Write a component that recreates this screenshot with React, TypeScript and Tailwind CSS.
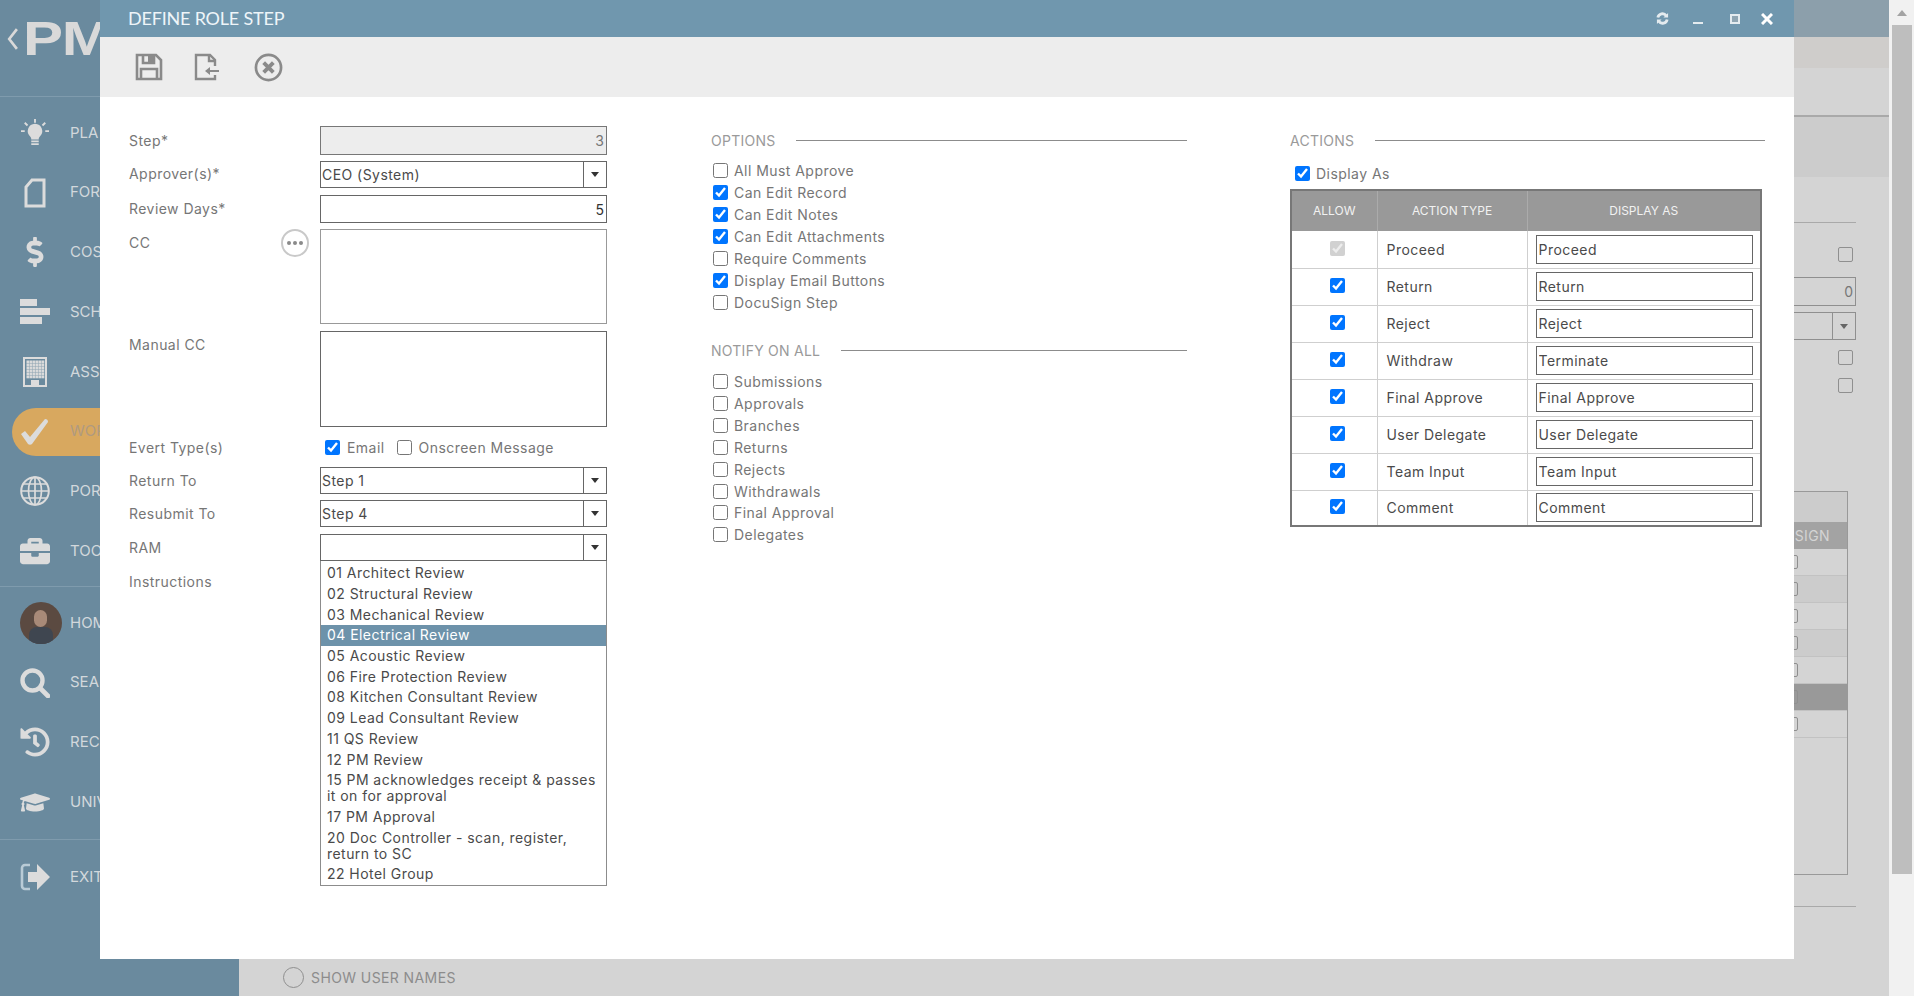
import { useState } from "react";
import { FaBriefcase, FaDollarSign, FaGraduationCap, FaHistory } from "react-icons/fa";

const labelText = "text-[14px] text-[#767676] tracking-[0.45px]";
const valueText = "text-[14px] text-[#4a4a4a] tracking-[0.45px]";

type IconProps = { className?: string };

function BulbIcon({ className }: IconProps) {
  return (
    <svg viewBox="0 0 30 30" className={className} fill="currentColor" stroke="currentColor">
      <path d="M15 0v4M4 4l3 3M26 4l-3 3M0 13h4M26 13h4" strokeWidth="2" fill="none" />
      <path d="M15 5a8 8 0 0 0-5 14c1 1 1 2 1 3h8c0-1 0-2 1-3a8 8 0 0 0-5-14z" stroke="none" />
      <path d="M11 24h8M11 27h8" strokeWidth="1.8" />
    </svg>
  );
}

function FormIcon({ className }: IconProps) {
  return (
    <svg viewBox="0 0 22 30" className={className} fill="none" stroke="currentColor" strokeWidth="3">
      <path d="M8 2h12v26H2V9z" />
    </svg>
  );
}

function BarsIcon({ className }: IconProps) {
  return (
    <svg viewBox="0 0 30 26" className={className} fill="currentColor">
      <rect x="0" y="0" width="17" height="7" />
      <rect x="0" y="9" width="30" height="7" />
      <rect x="0" y="18" width="22" height="7" />
    </svg>
  );
}

function BuildingIcon({ className }: IconProps) {
  const dots = [];
  for (let y = 4; y < 20; y += 3) {
    for (let x = 4; x < 20; x += 3) {
      dots.push(<rect key={`${x}-${y}`} x={x} y={y} width="1.8" height="1.8" fill="currentColor" />);
    }
  }
  return (
    <svg viewBox="0 0 24 30" className={className} fill="none" stroke="currentColor">
      <rect x="1" y="1" width="22" height="28" strokeWidth="2" />
      {dots}
      <path d="M8 29v-6h8v6z" fill="currentColor" stroke="none" />
    </svg>
  );
}

function CheckMark({ className }: IconProps) {
  return (
    <svg viewBox="0 0 28 26" className={className} fill="currentColor">
      <path d="M0 15l4-3 5 6L24 0c2 0 3 1 3 3L11 25c-1 1-3 1-4 0z" />
    </svg>
  );
}

function GlobeIcon({ className }: IconProps) {
  return (
    <svg viewBox="0 0 30 30" className={className} fill="none" stroke="currentColor" strokeWidth="1.7">
      <circle cx="15" cy="15" r="13.8" strokeWidth="2" />
      <ellipse cx="15" cy="15" rx="6.5" ry="13.8" />
      <path d="M15 1v28M1 15h28M3.5 8h23M3.5 22h23" />
    </svg>
  );
}

function SearchIcon({ className }: IconProps) {
  return (
    <svg viewBox="0 0 30 30" className={className} fill="none" stroke="currentColor">
      <circle cx="12.5" cy="12.5" r="10" strokeWidth="4.4" />
      <path d="M20 20l8 8" strokeWidth="4.6" strokeLinecap="round" />
    </svg>
  );
}

function ExitIcon({ className }: IconProps) {
  return (
    <svg viewBox="0 0 30 30" className={className} fill="none">
      <path d="M10 3H5a3 3 0 0 0-3 3v18a3 3 0 0 0 3 3h5" stroke="#b9cbd6" strokeWidth="2.6" />
      <path d="M8 10h9V2l13 13-13 13v-8H8z" fill="#dcdcdc" />
    </svg>
  );
}

const navTop = [
  { icon: BulbIcon, label: "PLA", size: "w-[28px] h-[30px]" },
  { icon: FormIcon, label: "FOR", size: "w-[22px] h-[30px]" },
  { icon: FaDollarSign, label: "COS", size: "w-[26px] h-[30px]" },
  { icon: BarsIcon, label: "SCH", size: "w-[30px] h-[26px]" },
  { icon: BuildingIcon, label: "ASS", size: "w-[24px] h-[30px]" },
  { icon: CheckMark, label: "WOR", size: "w-[28px] h-[26px]", active: true },
  { icon: GlobeIcon, label: "POR", size: "w-[30px] h-[30px]" },
  { icon: FaBriefcase, label: "TOO", size: "w-[30px] h-[30px]" },
];

const navBottom = [
  { icon: SearchIcon, label: "SEA", size: "w-[30px] h-[30px]" },
  { icon: FaHistory, label: "REC", size: "w-[30px] h-[30px]" },
  { icon: FaGraduationCap, label: "UNIV", size: "w-[30px] h-[27px]" },
];

function NavRow({ item }: { item: (typeof navTop)[number] }) {
  return (
    <div className="flex h-[59.75px] items-center pl-[12px]">
      <div
        className={
          item.active
            ? "flex h-[48px] flex-1 items-center rounded-l-full bg-[#d8a85f] pl-[8px] text-[#dcdcdc]"
            : "flex h-[48px] flex-1 items-center pl-[8px] text-[#dcdcdc]"
        }
      >
        <div className="flex w-[30px] justify-center">
          <item.icon className={item.size} />
        </div>
        <span className={item.active ? "ml-[20px] text-[15px] text-[#b09a7f]" : "ml-[20px] text-[15px] text-[#d2d8dc]"}>
          {item.label}
        </span>
      </div>
    </div>
  );
}

function Sidebar() {
  return (
    <aside className="flex h-full w-[239px] shrink-0 flex-col bg-[#6a8a9e]">
      <div className="h-[97px] shrink-0 border-b border-[#7f9bad]">
        <div className="flex items-center pt-[19px] pl-[7px]">
          <svg viewBox="0 0 10 20" className="h-[22px] w-[11px]" fill="none" stroke="#d9d9d9" strokeWidth="2.4">
            <path d="M9 1L2 10l7 9" />
          </svg>
          <span className="ml-[5px] origin-left scale-x-[1.25] font-['Liberation_Sans',sans-serif] text-[48px] leading-[40px] font-bold tracking-[-1px] text-[#d9d9d9]">
            PM
          </span>
        </div>
      </div>
      <div className="h-[490px] shrink-0 border-b border-[#7f9bad] pt-[6px]">
        {navTop.map((item) => (
          <NavRow key={item.label} item={item} />
        ))}
      </div>
      <div className="h-[253px] shrink-0 border-b border-[#7f9bad] pt-[6px]">
        <div className="flex h-[59.75px] items-center pl-[20px]">
          <div className="relative h-[42px] w-[42px] shrink-0 overflow-hidden rounded-full bg-[#5b4a41]">
            <div className="absolute top-[8px] left-[14px] h-[17px] w-[13px] rounded-full bg-[#a88a78]" />
            <div className="absolute top-[25px] left-[9px] h-[20px] w-[24px] rounded-t-lg bg-[#3f4650]" />
          </div>
          <span className="ml-[8px] text-[15px] text-[#d2d8dc]">HOM</span>
        </div>
        {navBottom.map((item) => (
          <NavRow key={item.label} item={item} />
        ))}
      </div>
      <div className="mt-[7px]">
        <NavRow item={{ icon: ExitIcon, label: "EXIT", size: "w-[30px] h-[30px]" }} />
      </div>
    </aside>
  );
}

const pageRows = ["bg-[#d4d4d4]", "bg-[#cccccc]", "bg-[#d4d4d4]", "bg-[#cccccc]", "bg-[#d4d4d4]", "bg-[#999999]", "bg-[#d4d4d4]"];

// the page behind the dialog, only its right edge and bottom show
function BackPage() {
  return (
    <main className="flex h-full min-w-0 flex-1 flex-col bg-[#d4d4d4]">
      <div className="h-[37px] shrink-0 bg-[#8c9fab]" />
      <div className="h-[31px] shrink-0 bg-[#cfcdcb]" />
      <div className="h-[49px] shrink-0 border-b-2 border-[#a9a9a9]" />
      <div className="h-[60px] shrink-0 bg-[#cccccc]" />
      <div className="flex flex-1 flex-col pr-[33px]">
        <div className="mt-[45px] border-b border-[#a9a9a9]" />
        <div className="mt-[24px] flex justify-end pr-[3px]">
          <span className="h-[15px] w-[15px] rounded-[2px] border border-[#8f8f8f]" />
        </div>
        <div className="mt-[15px] flex h-[29px] items-center justify-end border border-[#8f8f8f] pr-[2px] text-[14px] text-[#777]">
          0
        </div>
        <div className="mt-[6px] flex h-[28px] justify-end border border-[#8f8f8f]">
          <div className="flex w-[23px] items-center justify-center border-l border-[#8f8f8f]">
            <span className="border-x-[4px] border-t-[5px] border-x-transparent border-t-[#666]" />
          </div>
        </div>
        <div className="mt-[10px] flex justify-end pr-[3px]">
          <span className="h-[15px] w-[15px] rounded-[2px] border border-[#8f8f8f]" />
        </div>
        <div className="mt-[13px] flex justify-end pr-[3px]">
          <span className="h-[15px] w-[15px] rounded-[2px] border border-[#8f8f8f]" />
        </div>
        <div className="mt-[98px] mr-[8px] flex h-[384px] flex-col border border-[#999]">
          <div className="h-[30px] shrink-0 bg-[#cccccc]" />
          <div className="flex h-[27px] shrink-0 items-center justify-end bg-[#a3a3a3]">
            <span className="w-[112px] pr-[17px] text-right text-[14px] tracking-[0.4px] text-[#d4d4d4]">DOCUSIGN</span>
          </div>
          {pageRows.map((row, i) => (
            <div key={i} className={`flex h-[27px] shrink-0 items-center justify-end border-b border-[#c2c2c2] ${row}`}>
              <div className="flex w-[112px] justify-center">
                <span className="h-[14px] w-[14px] rounded-[2px] border border-[#8f8f8f]" />
              </div>
            </div>
          ))}
        </div>
        <div className="mt-[31px] border-b border-[#a9a9a9]" />
      </div>
      <div className="flex h-[37px] shrink-0 items-center pl-[44px]">
        <span className="h-[21px] w-[21px] rounded-full border border-[#8f8f8f]" />
        <span className="ml-[7px] text-[14px] tracking-[0.4px] text-[#8c8c8c]">SHOW USER NAMES</span>
      </div>
    </main>
  );
}

function PageScrollbar() {
  return (
    <div className="flex h-full w-[25px] shrink-0 flex-col bg-[#f1f1f1] pl-[3px] pr-[2px]">
      <div className="flex h-[25px] shrink-0 items-center justify-center">
        <span className="border-x-[5px] border-b-[6px] border-x-transparent border-b-[#a3a3a3]" />
      </div>
      <div className="h-[849px] bg-[#bebebe]" />
    </div>
  );
}

function Combo({ value }: { value: string }) {
  return (
    <div className="flex h-[27px] w-[287px] border border-[#666] bg-white">
      <span className={`flex flex-1 items-center pl-[1px] ${valueText}`}>{value}</span>
      <div className="flex w-[23px] items-center justify-center border-l border-[#666]">
        <span className="border-x-[4px] border-t-[5px] border-x-transparent border-t-[#333]" />
      </div>
    </div>
  );
}

function LeftRow({ label, className, children }: { label: string; className: string; children: React.ReactNode }) {
  return (
    <div className={`flex items-start ${className}`}>
      <span className={`w-[191px] shrink-0 ${labelText}`}>{label}</span>
      {children}
    </div>
  );
}

const ramOptions = [
  "01 Architect Review",
  "02 Structural Review",
  "03 Mechanical Review",
  "04 Electrical Review",
  "05 Acoustic Review",
  "06 Fire Protection Review",
  "08 Kitchen Consultant Review",
  "09 Lead Consultant Review",
  "11 QS Review",
  "12 PM Review",
  "15 PM acknowledges receipt & passes it on for approval",
  "17 PM Approval",
  "20 Doc Controller - scan, register, return to SC",
  "22 Hotel Group",
];

function LeftColumn() {
  return (
    <div className="w-[478px] shrink-0">
      <LeftRow label="Step*" className="mb-[6px] h-[29px] leading-[29px]">
        <input
          readOnly
          value="3"
          className="h-[29px] w-[287px] border border-[#777] bg-[#ededed] pr-[2px] text-right text-[14px] text-[#777]"
        />
      </LeftRow>
      <LeftRow label="Approver(s)*" className="mb-[7px] h-[27px] leading-[26px]">
        <Combo value="CEO (System)" />
      </LeftRow>
      <LeftRow label="Review Days*" className="mb-[6px] h-[28px] leading-[27px]">
        <input
          readOnly
          value="5"
          className="h-[28px] w-[287px] border border-[#666] bg-white pr-[2px] text-right text-[14px] text-[#333]"
        />
      </LeftRow>
      <LeftRow label="CC" className="mb-[7px] h-[95px] leading-[28px]">
        <div className="relative">
          <button className="absolute top-0 left-[-39px] flex h-[28px] w-[28px] items-center justify-center gap-[2px] rounded-full border-2 border-[#c9c9c9] bg-white">
            <span className="h-[4px] w-[4px] rounded-full bg-[#8a8a8a]" />
            <span className="h-[4px] w-[4px] rounded-full bg-[#8a8a8a]" />
            <span className="h-[4px] w-[4px] rounded-full bg-[#8a8a8a]" />
          </button>
          <textarea readOnly className="block h-[95px] w-[287px] resize-none border border-[#999] bg-white" />
        </div>
      </LeftRow>
      <LeftRow label="Manual CC" className="mb-[7px] h-[96px] leading-[28px]">
        <textarea readOnly className="block h-[96px] w-[287px] resize-none border border-[#666] bg-white" />
      </LeftRow>
      <LeftRow label="Evert Type(s)" className="mb-[6px] h-[27px] items-center leading-[27px]">
        <label className={`ml-[5px] flex items-center ${labelText}`}>
          <input type="checkbox" defaultChecked className="mr-[7px] h-[15px] w-[15px]" />
          Email
        </label>
        <label className={`ml-[12px] flex items-center ${labelText}`}>
          <input type="checkbox" className="mr-[7px] h-[15px] w-[15px]" />
          Onscreen Message
        </label>
      </LeftRow>
      <LeftRow label="Return To" className="mb-[6px] h-[27px] leading-[27px]">
        <Combo value="Step 1" />
      </LeftRow>
      <LeftRow label="Resubmit To" className="mb-[7px] h-[27px] leading-[27px]">
        <Combo value="Step 4" />
      </LeftRow>
      <LeftRow label="RAM" className="h-[27px] leading-[27px]">
        <Combo value="" />
      </LeftRow>
      <div className="flex items-start">
        <span className={`mt-[7px] w-[191px] shrink-0 leading-[27px] ${labelText}`}>Instructions</span>
        <ul className="w-[287px] border border-t-0 border-[#8c8c8c] bg-white pt-[2px]">
          {ramOptions.map((o) => (
            <li
              key={o}
              className={
                o.startsWith("04")
                  ? "bg-[#6d92aa] py-[2.35px] pl-[6px] text-[14px] leading-4 tracking-[0.45px] text-white"
                  : `py-[2.35px] pl-[6px] pr-[8px] leading-4 ${valueText}`
              }
            >
              {o}
            </li>
          ))}
        </ul>
      </div>
    </div>
  );
}

function SectionHead({ title }: { title: string }) {
  return (
    <div className="flex h-[28px] items-center">
      <span className="mr-[21px] text-[14px] tracking-[0.25px] text-[#9a9a9a]">{title}</span>
      <span className="flex-1 border-t border-[#8c8c8c]" />
    </div>
  );
}

function CheckRow({ label, checked = false, h = "h-[22px]" }: { label: string; checked?: boolean; h?: string }) {
  return (
    <label className={`flex ${h} items-center pl-[2px] ${labelText}`}>
      <input type="checkbox" defaultChecked={checked} className="mr-[6px] h-[15px] w-[15px]" />
      {label}
    </label>
  );
}

const options = [
  { label: "All Must Approve" },
  { label: "Can Edit Record", checked: true },
  { label: "Can Edit Notes", checked: true },
  { label: "Can Edit Attachments", checked: true },
  { label: "Require Comments" },
  { label: "Display Email Buttons", checked: true },
  { label: "DocuSign Step" },
];

const notifyOn = ["Submissions", "Approvals", "Branches", "Returns", "Rejects", "Withdrawals", "Final Approval", "Delegates"];

const actions = [
  ["Proceed", "Proceed"],
  ["Return", "Return"],
  ["Reject", "Reject"],
  ["Withdraw", "Terminate"],
  ["Final Approve", "Final Approve"],
  ["User Delegate", "User Delegate"],
  ["Team Input", "Team Input"],
  ["Comment", "Comment"],
];

function ActionsTable() {
  return (
    <table className="mt-[5px] w-[472px] table-fixed border-collapse border-2 border-[#777]">
      <thead>
        <tr className="h-[41px] bg-[#999999] text-[12px] font-normal text-[#f2f2f2]">
          <th className="w-[86px] border-r border-[#ababab] font-normal">ALLOW</th>
          <th className="w-[150px] border-r border-[#ababab] font-normal">ACTION TYPE</th>
          <th className="font-normal">DISPLAY AS</th>
        </tr>
      </thead>
      <tbody>
        {actions.map(([type, shown], i) => (
          <tr key={type} className={i === 7 ? "h-[36px]" : "h-[37px] border-b border-[#cfcfcf]"}>
            <td className="border-r border-[#cfcfcf] pl-[6px] pb-[2px]">
              <input type="checkbox" defaultChecked disabled={i === 0} className="mx-auto block h-[15px] w-[15px]" />
            </td>
            <td className={`border-r border-[#cfcfcf] pl-[9px] ${valueText}`}>{type}</td>
            <td className="pl-[8px]">
              <input
                readOnly
                value={shown}
                className={`block h-[29px] w-[217px] border border-[#666] bg-white pl-[2px] ${valueText}`}
              />
            </td>
          </tr>
        ))}
      </tbody>
    </table>
  );
}

function SaveIcon() {
  return (
    <svg viewBox="0 0 28 28" className="h-[28px] w-[28px]" fill="none" stroke="#8a8a8a" strokeWidth="2.6">
      <path d="M2 2h19l5 5v19H2z" />
      <path d="M8 2v8h11V2" />
      <rect x="13" y="3" width="6" height="7" fill="#8a8a8a" stroke="none" />
      <path d="M6 26V16h16v10" />
    </svg>
  );
}

function LoadIcon() {
  return (
    <svg viewBox="0 0 26 28" className="h-[28px] w-[26px]" fill="none" stroke="#8a8a8a" strokeWidth="2.4">
      <path d="M21 13V7l-5-5H2v24h19v-4" />
      <path d="M15 2v6h6" />
      <path d="M11 18l5-4v3h9v2h-9v3z" fill="#8a8a8a" stroke="none" />
    </svg>
  );
}

function CancelIcon() {
  return (
    <svg viewBox="0 0 30 30" className="h-[29px] w-[29px]" fill="none" stroke="#8a8a8a">
      <circle cx="15" cy="15" r="13" strokeWidth="2.8" />
      <path d="M10 10l10 10M20 10L10 20" strokeWidth="4" />
    </svg>
  );
}

function Dialog() {
  const [title] = useState("DEFINE ROLE STEP");
  return (
    <section className="absolute top-0 left-[100px] flex h-[959px] w-[1694px] flex-col bg-white">
      <header className="flex h-[37px] shrink-0 items-center bg-[#7097ae] pl-[28px]">
        <h1 className="font-['Lato',sans-serif] text-[18px] tracking-[-0.2px] text-[#eef5f9]">{title}</h1>
        <div className="ml-auto flex items-center pr-[21px] text-[#e4ebef]">
          <svg viewBox="0 0 14 14" className="h-[13px] w-[13px]" fill="none" stroke="currentColor" strokeWidth="3">
            <path d="M2 6a5 5 0 0 1 9-2M12 8a5 5 0 0 1-9 2" />
            <path d="M13 1v5H8M1 13V8h5" fill="currentColor" stroke="none" />
          </svg>
          <span className="ml-[24px] mt-[8px] h-[2px] w-[10px] bg-current" />
          <span className="ml-[27px] h-[10px] w-[10px] border-[2.5px] border-current bg-[#8fa5b2]" />
          <svg viewBox="0 0 12 12" className="ml-[21px] h-[12px] w-[12px]" stroke="#ffffff" strokeWidth="3">
            <path d="M1 1l10 10M11 1L1 11" />
          </svg>
        </div>
      </header>
      <div className="flex h-[60px] shrink-0 items-center bg-[#ededed] pl-[35px]">
        <SaveIcon />
        <div className="ml-[31px]">
          <LoadIcon />
        </div>
        <div className="ml-[34px]">
          <CancelIcon />
        </div>
      </div>
      <div className="flex flex-1 pt-[29px] pl-[29px]">
        <LeftColumn />
        <div className="ml-[104px] w-[476px] shrink-0">
          <SectionHead title="OPTIONS" />
          <div className="mt-[5.5px]">
            {options.map((o) => (
              <CheckRow key={o.label} label={o.label} checked={o.checked} />
            ))}
          </div>
          <div className="mt-[22.5px]">
            <SectionHead title="NOTIFY ON ALL" />
          </div>
          <div className="mt-[7px]">
            {notifyOn.map((n) => (
              <CheckRow key={n} label={n} h="h-[21.85px]" />
            ))}
          </div>
        </div>
        <div className="ml-[103px] w-[475px] shrink-0">
          <SectionHead title="ACTIONS" />
          <div className="mt-[8px] pl-[3px]">
            <CheckRow label="Display As" checked />
          </div>
          <ActionsTable />
        </div>
      </div>
    </section>
  );
}

export default function App() {
  return (
    <div className="relative flex h-[996px] w-[1914px] overflow-hidden font-['Inter',sans-serif]">
      <Sidebar />
      <BackPage />
      <PageScrollbar />
      <Dialog />
    </div>
  );
}
